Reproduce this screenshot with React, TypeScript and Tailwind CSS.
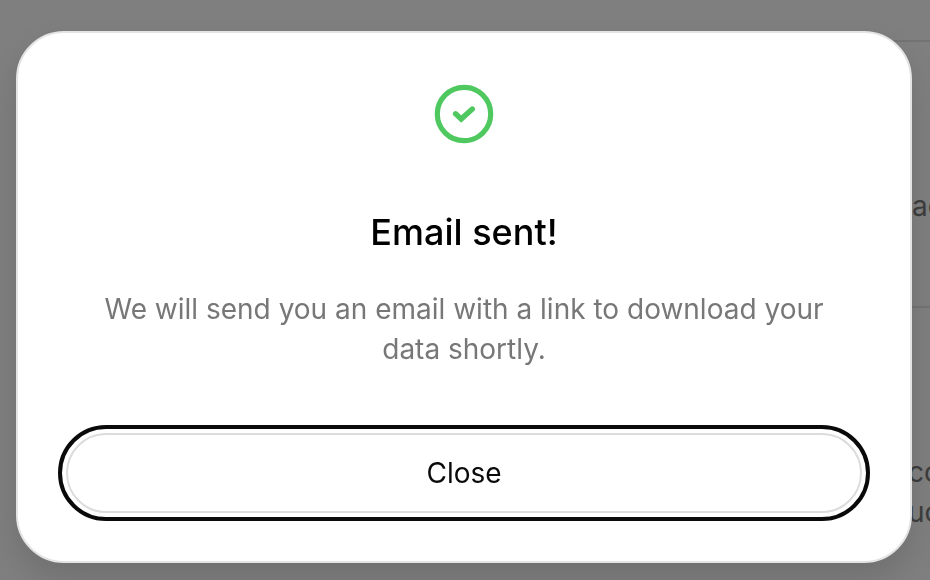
import React, { useState } from 'react';

function SuccessIcon() {
  return (
    <svg className="h-[66px] w-[66px] text-[#4fc95f]" viewBox="0 0 66 66" fill="none" stroke="currentColor" strokeWidth="5.2" aria-hidden="true">
      <circle cx="33" cy="33" r="26.7" />
      <path d="M24.6 32.8 L30.2 38 L41.3 28" strokeWidth="5.4" strokeLinecap="round" strokeLinejoin="miter" />
    </svg>
  );
}

// Settings page that sits dimmed behind the dialog
function SettingsPage() {
  return (
    <main className="flex min-h-screen flex-col pl-12 pt-10 text-[28px] leading-10 text-[#3d3d3d]">
      <section className="flex h-[266px] flex-col items-end border-t-2 border-[#737373] pt-36">
        <p className="w-[18px] whitespace-nowrap">ac</p>
      </section>
      <section className="flex flex-1 flex-col items-end border-t-2 border-[#737373] pt-36">
        <p className="w-[22px] whitespace-nowrap">co</p>
        <p className="w-[22px] whitespace-nowrap">uc</p>
      </section>
    </main>
  );
}

export default function App() {
  const [open, setOpen] = useState(true);

  return (
    <div className="min-h-screen overflow-hidden bg-[#7f7f7f] font-['Inter',sans-serif]">
      <SettingsPage />
      {open && (
        <div className="fixed inset-0 pb-4 pl-4 pr-[18px] pt-[31px]">
          <div
            role="dialog"
            aria-modal="true"
            aria-labelledby="dialog-title"
            aria-describedby="dialog-text"
            className="flex flex-col items-center rounded-[48px] border-2 border-[#e4e4e4] bg-white p-12 text-center shadow-[0_16px_32px_rgba(0,0,0,0.12)]"
          >
            <SuccessIcon />
            <h2 id="dialog-title" className="mt-[61px] text-[36px] font-medium leading-[48px] text-black">
              Email sent!
            </h2>
            <p id="dialog-text" className="mt-[33px] px-4 text-[28px] leading-10 text-[#777777]">
              We will send you an email with a link to download your data shortly.
            </p>
            <button
              type="button"
              autoFocus
              onClick={() => setOpen(false)}
              className="mt-16 h-20 w-full rounded-full border-2 border-[#dcdcdc] bg-white text-[28px] leading-10 text-[#0a0a0a] outline-4 outline-offset-4 outline-[#0a0a0a]"
            >
              Close
            </button>
          </div>
        </div>
      )}
    </div>
  );
}
